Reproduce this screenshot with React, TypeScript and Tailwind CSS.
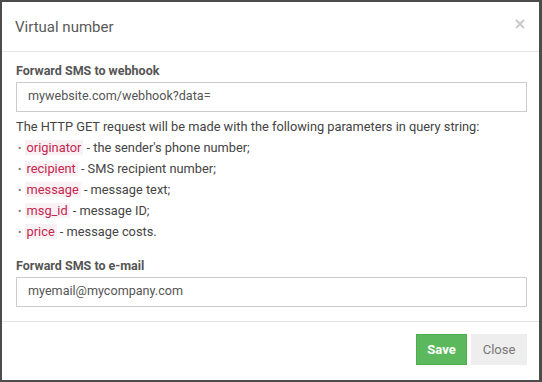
import React from 'react';

const params: { key: string; text: string }[] = [
  { key: 'originator', text: "the sender's phone number;" },
  { key: 'recipient', text: 'SMS recipient number;' },
  { key: 'message', text: 'message text;' },
  { key: 'msg_id', text: 'message ID;' },
  { key: 'price', text: 'message costs.' },
];

const Field: React.FC<{ label: string; value: string; className?: string }> = ({ label, value, className }) => (
  <div className={className}>
    <div className="text-[12.5px] leading-[18px] font-bold text-[#555] mb-[2px]">{label}</div>
    <div className="h-[30px] border border-[#ccc] bg-white px-[11px] flex items-center text-[12.6px] text-[#555] pb-[1px]">
      {value}
    </div>
  </div>
);

export default function App() {
  return (
    <div className="w-[542px] h-[382px] bg-[#4c4c4c] pt-[2px] pl-[2px] overflow-hidden" style={{ fontFamily: 'Roboto, "Liberation Sans", sans-serif' }}>
      <div className="w-[537px] h-[378px] bg-white flex flex-col">
        {/* Header */}
        <div className="h-[50px] border-b border-[#e5e5e5] pl-[13px] pr-[14px] pt-[15px] flex justify-between items-start">
          <h4 className="text-[15px] leading-[20px] text-[#595959]">Virtual number</h4>
          <svg width="10" height="10" viewBox="0 0 10 10" className="mt-[2px]">
            <path d="M1 1 L9 9 M9 1 L1 9" stroke="#c8c8c8" strokeWidth="1.8" />
          </svg>
        </div>

        {/* Body */}
        <div className="pl-[14px] pr-[12px] pt-[10px] pb-[14px] border-b border-[#e5e5e5]">
          <Field label="Forward SMS to webhook" value="mywebsite.com/webhook?data=" />
          <div className="mt-[4px] text-[12.8px] leading-[21px] text-[#444]">
            <div>The HTTP GET request will be made with the following parameters in query string:</div>
            {params.map((p) => (
              <div key={p.key} className="pl-[2px] h-[21px]">
                <span className="text-[#777] text-[10px] leading-[10px]">•</span>{' '}
                <span className="bg-[#f9f2f4] text-[#c7254e] px-[2px]">{p.key}</span> - {p.text}
              </div>
            ))}
          </div>
          <Field label="Forward SMS to e-mail" value="myemail@mycompany.com" className="mt-[15px]" />
        </div>

        {/* Footer */}
        <div className="flex justify-end gap-[4px] pr-[12px] pt-[12px]">
          <button className="h-[31px] w-[51px] bg-[#5cb85c] border border-[#4cae4c] text-white font-bold text-[13px]">Save</button>
          <button className="h-[31px] w-[56px] bg-[#eeeeee] text-[#777] text-[13px]">Close</button>
        </div>
      </div>
    </div>
  );
}
